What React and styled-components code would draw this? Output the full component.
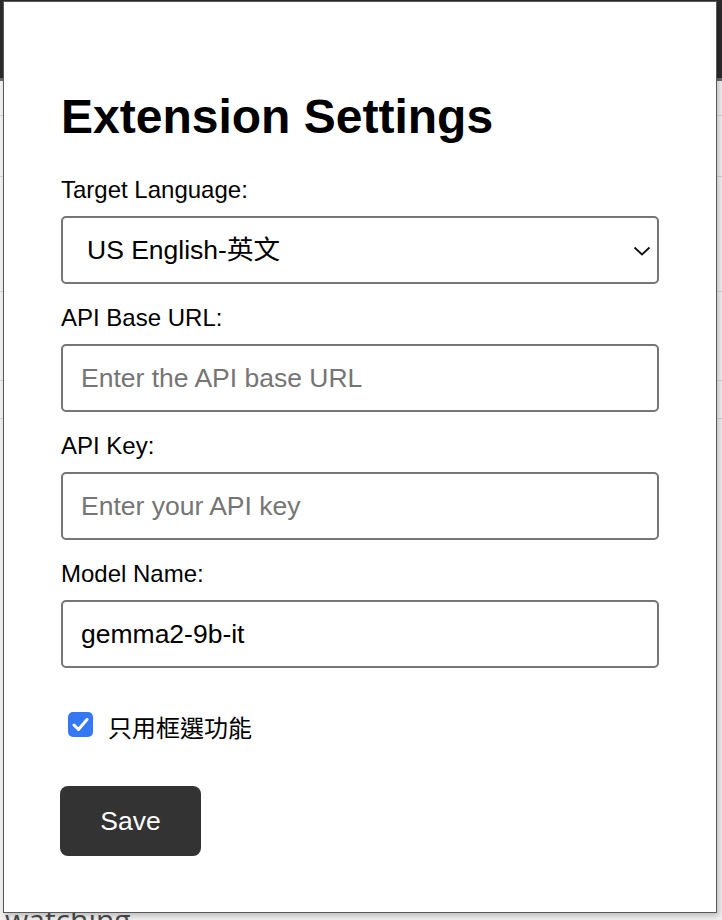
import React from "react";
import styled, { createGlobalStyle } from "styled-components";

const Global = createGlobalStyle`
  html, body { margin: 0; padding: 0; }
  body {
    width: 722px;
    height: 920px;
    overflow: hidden;
    background: #f1f1f1;
    font-family: "Liberation Sans", Arial, "Noto Sans CJK TC", sans-serif;
  }
`;

const Stage = styled.div`
  position: relative;
  width: 722px;
  height: 920px;
  overflow: hidden;
`;

const Backdrop = styled.div`
  display: flex;
  flex-direction: column;
  height: 920px;
`;

const TopBar = styled.div`
  height: 78px;
  background: #2b2b2b;
  border-bottom: 3px solid #6b6b6b;
  flex: none;
`;

const BgRow = styled.div`
  height: ${(p) => p.$h}px;
  border-bottom: 1px solid #d4d4d4;
  flex: none;
  background: #f3f3f3;
`;

const BgFill = styled.div`
  flex: 1;
`;

const BgText = styled.div`
  font-family: "Open Sans", "Liberation Sans", sans-serif;
  font-size: 30px;
  line-height: 28px;
  color: #4a4a4a;
  padding-left: 5px;
  margin-bottom: -14px;
  flex: none;
`;

const Popup = styled.div`
  position: absolute;
  top: 1px;
  left: 3px;
  width: 714px;
  height: 912px;
  box-sizing: border-box;
  background: #ffffff;
  border: 1px solid #5a5a5a;
  box-shadow: 2px 3px 6px rgba(0, 0, 0, 0.22);
  padding: 0 57px;
  display: flex;
  flex-direction: column;
`;

const Title = styled.h1`
  margin: 87px 0 32px;
  font-size: 48px;
  font-weight: 700;
  line-height: 55px;
  color: #000;
`;

const Label = styled.label`
  display: block;
  font-size: 24px;
  line-height: 28px;
  color: #000;
  margin-bottom: 12px;
`;

const Field = styled.div`
  position: relative;
  margin-bottom: 20px;
`;

const Select = styled.select`
  appearance: none;
  -webkit-appearance: none;
  width: 100%;
  height: 68px;
  box-sizing: border-box;
  border: 2px solid #767676;
  border-radius: 5px;
  background: #fff;
  padding: 0 50px 0 24px;
  font-family: "Liberation Sans", Arial, "Noto Sans CJK TC", sans-serif;
  font-size: 26.5px;
  color: #000;
  outline: none;
`;

const Chevron = styled.svg`
  position: absolute;
  right: 8px;
  top: 29px;
  width: 18px;
  height: 12px;
  pointer-events: none;
`;

const Input = styled.input`
  width: 100%;
  height: 68px;
  box-sizing: border-box;
  border: 2px solid #767676;
  border-radius: 5px;
  background: #fff;
  padding: 0 18px;
  font-family: "Liberation Sans", Arial, sans-serif;
  font-size: 26.5px;
  color: #000;
  outline: none;
  &::placeholder { color: #757575; }
`;

const CheckRow = styled.label`
  display: flex;
  align-items: flex-start;
  gap: 15px;
  margin: 24px 0 43px 7px;
  font-family: "Liberation Sans", "Noto Sans CJK TC", sans-serif;
  font-size: 24px;
  line-height: 28px;
  color: #000;
`;

const CheckText = styled.span`
  margin-top: 3px;
`;

const HiddenBox = styled.input`
  display: none;
`;

const Box = styled.span`
  width: 25px;
  height: 25px;
  border-radius: 5px;
  background: #3478f6;
  display: flex;
  align-items: center;
  justify-content: center;
  flex: none;
`;

const SaveButton = styled.button`
  align-self: flex-start;
  margin-left: -1px;
  width: 141px;
  height: 70px;
  border: none;
  border-radius: 8px;
  background: #333333;
  color: #fff;
  font-family: "Liberation Sans", Arial, sans-serif;
  font-size: 26.5px;
  font-weight: 500;
  cursor: pointer;
`;

export default function App() {
  return (
    <Stage>
      <Global />
      <Backdrop>
        <TopBar />
        <BgRow $h={34} />
        <BgRow $h={60} />
        <BgRow $h={114} />
        <BgRow $h={88} />
        <BgRow $h={37} />
        <BgFill />
        <BgText>watching</BgText>
      </Backdrop>
      <Popup>
        <Title>Extension Settings</Title>
        <Label htmlFor="lang">Target Language:</Label>
        <Field>
          <Select id="lang" defaultValue="en">
            <option value="en">US English-英文</option>
          </Select>
          <Chevron viewBox="0 0 18 12">
            <path d="M1.5 2.5 L9 9.5 L16.5 2.5" fill="none" stroke="#111" strokeWidth="1.8" />
          </Chevron>
        </Field>
        <Label htmlFor="base">API Base URL:</Label>
        <Field>
          <Input id="base" placeholder="Enter the API base URL" />
        </Field>
        <Label htmlFor="key">API Key:</Label>
        <Field>
          <Input id="key" placeholder="Enter your API key" />
        </Field>
        <Label htmlFor="model">Model Name:</Label>
        <Field>
          <Input id="model" defaultValue="gemma2-9b-it" />
        </Field>
        <CheckRow>
          <HiddenBox type="checkbox" defaultChecked />
          <Box>
            <svg width="17" height="15" viewBox="0 0 17 15">
              <path d="M2 8 L6.5 12.5 L15 2.5" fill="none" stroke="#fff" strokeWidth="3" strokeLinecap="round" strokeLinejoin="round" />
            </svg>
          </Box>
          <CheckText>只用框選功能</CheckText>
        </CheckRow>
        <SaveButton>Save</SaveButton>
      </Popup>
    </Stage>
  );
}
